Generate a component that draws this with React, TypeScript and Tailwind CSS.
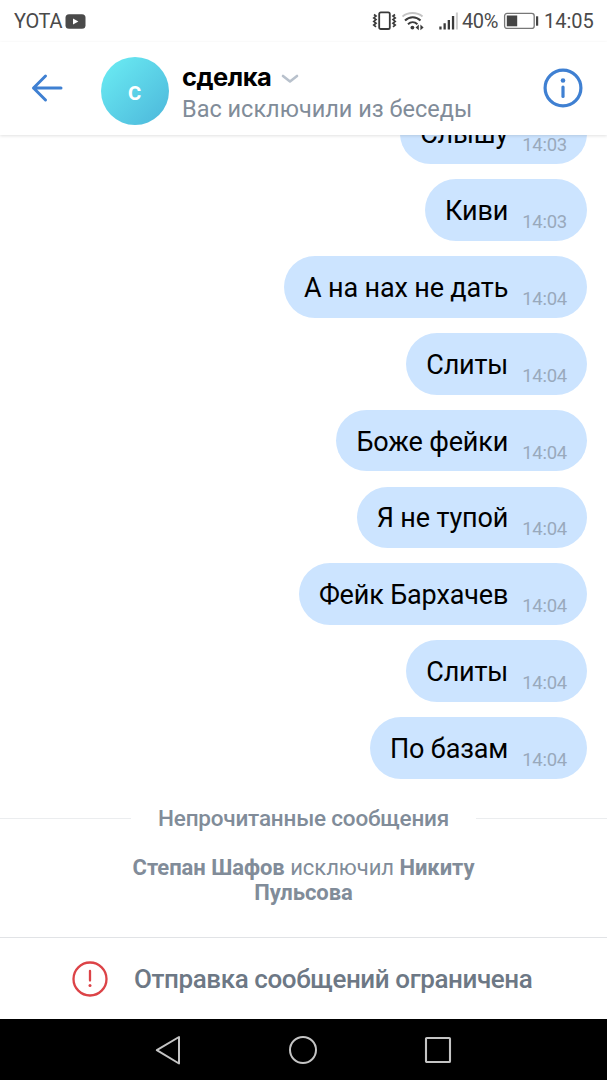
import { useState } from 'react';

// ---------- types ----------

interface Message {
  id: number;
  text: string;
  time: string;
}

// ---------- data ----------

const messages: Message[] = [
  { id: 1, text: 'Слышу', time: '14:03' },
  { id: 2, text: 'Киви', time: '14:03' },
  { id: 3, text: 'А на нах не дать', time: '14:04' },
  { id: 4, text: 'Слиты', time: '14:04' },
  { id: 5, text: 'Боже фейки', time: '14:04' },
  { id: 6, text: 'Я не тупой', time: '14:04' },
  { id: 7, text: 'Фейк Бархачев', time: '14:04' },
  { id: 8, text: 'Слиты', time: '14:04' },
  { id: 9, text: 'По базам', time: '14:04' },
];

// ---------- status bar ----------

function StatusBar() {
  return (
    <div className="flex h-[42px] shrink-0 items-center pr-[13px] pl-[14px] text-[20px] leading-none text-[#4a4a4a]">
      <span className="w-[51px] whitespace-nowrap tracking-[-0.3px]">YOTA</span>
      <svg width="21" height="15" viewBox="0 0 21 15">
        <rect x="0.5" y="0.3" width="20" height="14.4" rx="3.5" fill="#4a4a4a" />
        <path d="M8 4.4v6l5.4-3z" fill="#fff" />
      </svg>

      <div className="ml-auto flex items-center">
        {/* vibrate */}
        <svg className="mr-[1px]" width="25" height="20" viewBox="0 0 25 20" fill="none" stroke="#3a3a3a">
          <rect x="7.2" y="1.4" width="10.6" height="16.6" rx="1.6" strokeWidth="1.8" />
          <path d="M2 3.5l2 1.6-2.2 1.8L4 8.6l-2.2 1.8L4 12.2l-2.2 1.8L4 15.8" strokeWidth="1.7" />
          <path d="M23 3.5l-2 1.6 2.2 1.8L21 8.6l2.2 1.8-2.2 1.8 2.2 1.8-2.2 1.8" strokeWidth="1.7" />
        </svg>
        {/* wifi */}
        <svg className="ml-1" width="23" height="20" viewBox="0 0 23 20" fill="none">
          <path d="M0.5 5.5C6 0.8 15 0.8 20.5 5.5" stroke="#c4c4c4" strokeWidth="1.9" />
          <path d="M3 9.5C7.5 5 14 5 18.5 9.5" stroke="#3a3a3a" strokeWidth="2" />
          <path d="M6 13.2c2.8-2.6 6.6-2.6 9.4 0" stroke="#3a3a3a" strokeWidth="2" />
          <circle cx="10.4" cy="16.6" r="1.9" fill="#3a3a3a" />
          <path d="M16.8 13.6v5.6l-3.2-2.8zM18.4 13.6v5.6l3.2-2.8z" fill="#3a3a3a" />
        </svg>
        {/* signal */}
        <svg className="ml-[14px]" width="21" height="20" viewBox="0 0 21 20">
          <path d="M0.3 15.5h2.3v3H0.3zM4.5 12.2h2.3v6.3H4.5zM8.7 9h2.3v9.5H8.7zM12.9 5h2.3v13.5h-2.3z" fill="#3a3a3a" />
          <path d="M16.9 1.5h2v17h-2z" fill="#ccc" />
        </svg>
        <span className="ml-[2px] w-[41px] whitespace-nowrap tracking-[-0.4px]">40%</span>
        <svg width="36" height="18" viewBox="0 0 36 18">
          <rect x="1.6" y="1.4" width="29.6" height="15" rx="2.5" fill="none" stroke="#777" strokeWidth="1.3" />
          <rect x="3.8" y="3.5" width="10.4" height="10.8" fill="#444" />
          <rect x="33" y="4.3" width="2.2" height="9.4" fill="#444" />
        </svg>
        <span className="ml-[5px] w-[50px] whitespace-nowrap">14:05</span>
      </div>
    </div>
  );
}

// ---------- chat header ----------

function ChatHeader() {
  return (
    <header className="z-10 flex h-[93px] shrink-0 items-center bg-white pr-[24px] pl-[31px] shadow-[0_1px_3px_rgba(0,0,0,0.12)]">
      <button className="-mt-[2px]" aria-label="Назад">
        <svg width="32" height="30" viewBox="0 0 32 30" fill="none" stroke="#3f80d2" strokeWidth="3" strokeLinecap="round" strokeLinejoin="round">
          <path d="M30 15H2.5M14.5 3L2.5 15l12 12" />
        </svg>
      </button>
      <div className="mt-[5px] ml-[38px] flex size-[68px] items-center justify-center rounded-full bg-linear-to-br from-[#6ceef4] to-[#4cb6da] text-[26px] font-medium text-white">
        <span className="-ml-[1px]">с</span>
      </div>
      <div className="mt-[8px] ml-[13px] flex flex-col">
        <div className="flex h-8 items-center">
          <h1 className="font-['Inter',sans-serif] text-[25.5px] leading-8 font-bold tracking-[-0.5px] text-black">сделка</h1>
          <svg className="mt-[4px] ml-[10px]" width="18" height="10" viewBox="0 0 18 10" fill="none" stroke="#b8c1cc" strokeWidth="2.6" strokeLinecap="round" strokeLinejoin="round">
            <path d="M2 2l7 5.5L16 2" />
          </svg>
        </div>
        <p className="text-[23.5px] leading-8 whitespace-nowrap text-[#818c99]">Вас исключили из беседы</p>
      </div>
      <button className="-mt-[2px] ml-auto" aria-label="Информация">
        <svg width="40" height="40" viewBox="0 0 40 40" fill="none">
          <circle cx="20" cy="20" r="17.9" stroke="#3f80d2" strokeWidth="3.2" />
          <circle cx="20" cy="12.5" r="2.3" fill="#3f80d2" />
          <path d="M20 19v9.5" stroke="#3f80d2" strokeWidth="3.2" strokeLinecap="round" />
        </svg>
      </button>
    </header>
  );
}

// ---------- messages ----------

function Bubble({ message }: { message: Message }) {
  return (
    <div className="flex h-[61.5px] shrink-0 items-center rounded-full bg-[#cce4ff] pr-5 pl-5 whitespace-nowrap">
      <span className="mt-[2px] text-[27px] leading-8 tracking-[-0.15px] text-black">{message.text}</span>
      <span className="mt-[24px] ml-[14px] text-[18.5px] leading-5 tracking-[-0.25px] text-[#99a9bc]">{message.time}</span>
    </div>
  );
}

function UnreadDivider() {
  return (
    <div className="flex h-7 items-center text-[22.5px] font-medium tracking-[-0.2px] text-[#818c99]">
      <span className="h-[1.5px] flex-1 bg-[#ebedef]" />
      <span className="px-[27px] whitespace-nowrap">Непрочитанные сообщения</span>
      <span className="h-[1.5px] flex-1 bg-[#ebedef]" />
    </div>
  );
}

// ---------- bottom ----------

function RestrictedBar() {
  return (
    <footer className="flex h-[82px] shrink-0 items-center border-t border-[#e1e3e6] pl-[72px]">
      <svg width="36" height="36" viewBox="0 0 36 36" fill="none" stroke="#dc4347" strokeLinecap="round">
        <circle cx="18" cy="18" r="16.5" strokeWidth="2.3" />
        <path d="M18 10v9.5" strokeWidth="2.3" />
        <circle cx="18" cy="24.5" r="1.5" fill="#dc4347" stroke="none" />
      </svg>
      <span className="ml-[26px] text-[26px] leading-8 font-medium tracking-[-0.4px] whitespace-nowrap text-[#6d7885]">
        Отправка сообщений ограничена
      </span>
    </footer>
  );
}

function NavigationBar() {
  return (
    <nav className="flex h-[61px] shrink-0 items-center justify-center gap-[105px] bg-black pr-px">
      <svg width="30" height="32" viewBox="0 0 30 32" fill="none" stroke="#c4c4c4" strokeWidth="2" strokeLinejoin="round">
        <path d="M26 3v26.5L3.8 16.2z" />
      </svg>
      <svg width="30" height="30" viewBox="0 0 30 30" fill="none" stroke="#c4c4c4" strokeWidth="2">
        <circle cx="15" cy="15" r="13" />
      </svg>
      <svg width="30" height="30" viewBox="0 0 30 30" fill="none" stroke="#c4c4c4" strokeWidth="2.1">
        <rect x="3" y="3" width="24" height="24" rx="0.8" />
      </svg>
    </nav>
  );
}

export default function App() {
  const [items] = useState(messages);

  return (
    <div className="flex h-[1080px] w-[607px] flex-col overflow-hidden bg-white font-['Roboto',sans-serif]">
      <StatusBar />
      <ChatHeader />
      <main className="flex min-h-0 flex-1 flex-col justify-end overflow-hidden">
        <div className="flex flex-col items-end gap-[15.3px] pr-5">
          {items.map((m) => (
            <Bubble key={m.id} message={m} />
          ))}
        </div>
        <div className="mt-[26px]">
          <UnreadDivider />
        </div>
        <p className="mx-auto mt-[22px] mb-[32.5px] w-[360px] text-center text-[22px] leading-[25px] tracking-[-0.04px] text-[#818c99]">
          <b className="font-bold">Степан Шафов</b> исключил <b className="font-bold">Никиту Пульсова</b>
        </p>
      </main>
      <RestrictedBar />
      <NavigationBar />
    </div>
  );
}
